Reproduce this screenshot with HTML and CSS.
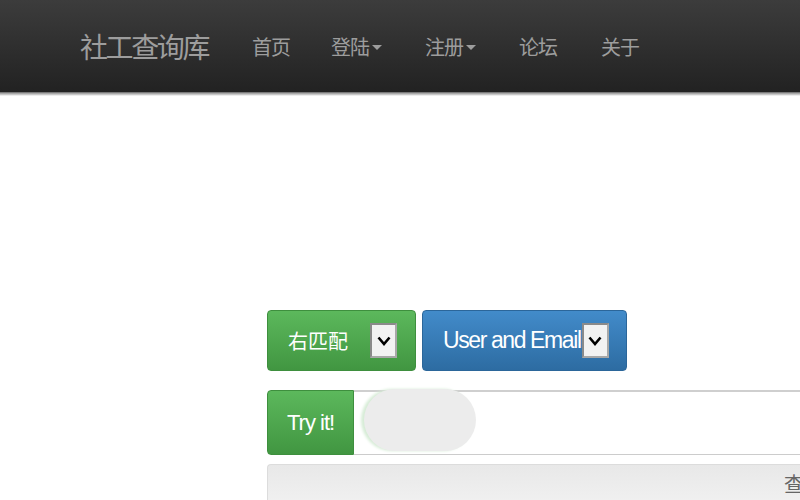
FILE: index.html
```html
<!DOCTYPE html>
<html>
<head>
<meta charset="utf-8">
<link rel="stylesheet" href="styles.css">
</head>
<body>
<header class="navbar">
  <div class="nav-inner">
    <span class="brand">社工查询库</span>
    <ul class="nav">
      <li class="nav-item">首页</li>
      <li class="nav-item">登陆<span class="caret"></span></li>
      <li class="nav-item">注册<span class="caret"></span></li>
      <li class="nav-item">论坛</li>
      <li class="nav-item">关于</li>
    </ul>
  </div>
</header>
<main class="content">
  <div class="btn-row">
    <div class="btn btn-green match">右匹配 <span class="sel"><svg width="14" height="10" viewBox="0 0 14 10"><path d="M1.5 1.5 L7 8 L12.5 1.5" fill="none" stroke="#000" stroke-width="2.6"/></svg></span></div>
    <div class="btn btn-blue field">User and Email<span class="sel"><svg width="14" height="10" viewBox="0 0 14 10"><path d="M1.5 1.5 L7 8 L12.5 1.5" fill="none" stroke="#000" stroke-width="2.6"/></svg></span></div>
  </div>
  <div class="input-group">
    <div class="btn btn-green try">Try it!</div>
    <div class="field-input"><span class="blur"></span></div>
  </div>
  <div class="well"><span class="query">查</span></div>
</main>
</body>
</html>
```
FILE: styles.css
```css
* { box-sizing: border-box; }
html, body { margin: 0; padding: 0; background: #fff; overflow: hidden; }
body { width: 800px; height: 500px; font-family: "Liberation Sans", "Noto Sans CJK SC", sans-serif; }

.navbar {
  height: 92px;
  background: linear-gradient(to bottom, #3c3c3c 0%, #222 100%);
  box-shadow: 0 1px 0 #7a7a7a, 0 2px 0 #a8a8a8, 0 3px 0 #c8c8c8, 0 4px 0 #ececec;
  position: relative;
}
.nav-inner { display: flex; align-items: center; height: 92px; padding-left: 80px; }
.brand { font-size: 28px; color: #9d9d9d; font-family: "Noto Sans CJK SC", sans-serif; margin-right: 44px; letter-spacing: -2.4px; }
.nav { display: flex; list-style: none; margin: 0; padding: 0; }
.nav-item { font-size: 20px; color: #9d9d9d; font-family: "Noto Sans CJK SC", sans-serif; margin-right: 41px; display: flex; align-items: center; letter-spacing: -1px; }
.nav-item:nth-child(2) { margin-right: 43px; }
.nav-item:nth-child(3) { margin-right: 43px; }
.nav-item:nth-child(4) { margin-right: 44px; }
.caret { display: inline-block; width: 0; height: 0; border-left: 5px solid transparent; border-right: 5px solid transparent; border-top: 5px solid #9d9d9d; margin-left: 3px; margin-top: 3px; }

.content { padding: 218px 0 0 267px; width: 1000px; }
.btn-row { display: flex; gap: 6px; }
.btn { display: flex; align-items: center; color: #fff; border-radius: 4px; height: 61px; }
.btn-green { background: linear-gradient(to bottom, #5cb85c 0%, #419641 100%); border: 1px solid #3e8f3e; }
.btn-blue { background: linear-gradient(to bottom, #428bca 0%, #2d6ca2 100%); border: 1px solid #2b669a; }
.match { width: 149px; padding-left: 20px; font-size: 20px; font-family: "Noto Sans CJK SC", sans-serif; }
.match .sel { margin-left: 22px; }
.field { width: 205px; padding-left: 20px; font-size: 23px; letter-spacing: -1.4px; }
.field .sel { margin-left: 1px; }
.sel { width: 27px; height: 35px; background: #f2f2f2; border: 2px solid #8a8a8a; border-right-color: #a8a8a8; border-bottom-color: #a8a8a8; display: flex; align-items: center; justify-content: center; letter-spacing: 0; }

.input-group { display: flex; margin-top: 19px; height: 65px; }
.try { width: 87px; height: 65px; border-radius: 4px 0 0 4px; padding-left: 19px; font-size: 22px; letter-spacing: -1px; }
.field-input { flex: 1; border: 1px solid #ccc; border-top: 2px solid #cfcfcf; border-left: none; border-right: none; display: flex; align-items: center; padding-left: 10px; }
.blur { width: 112px; height: 62px; border-radius: 31px; background: #ececec; box-shadow: -3px 0 3px #d6ecd6; margin-top: -7px; }

.well { margin-top: 9px; height: 60px; background: linear-gradient(to bottom, #e8e8e8 0%, #f5f5f5 100%); border: 1px solid #dcdcdc; border-right: none; border-radius: 4px 0 0 0; padding: 4px 0 0 516px; }
.query { font-size: 20px; color: #666; font-family: "Noto Sans CJK SC", sans-serif; }
```
